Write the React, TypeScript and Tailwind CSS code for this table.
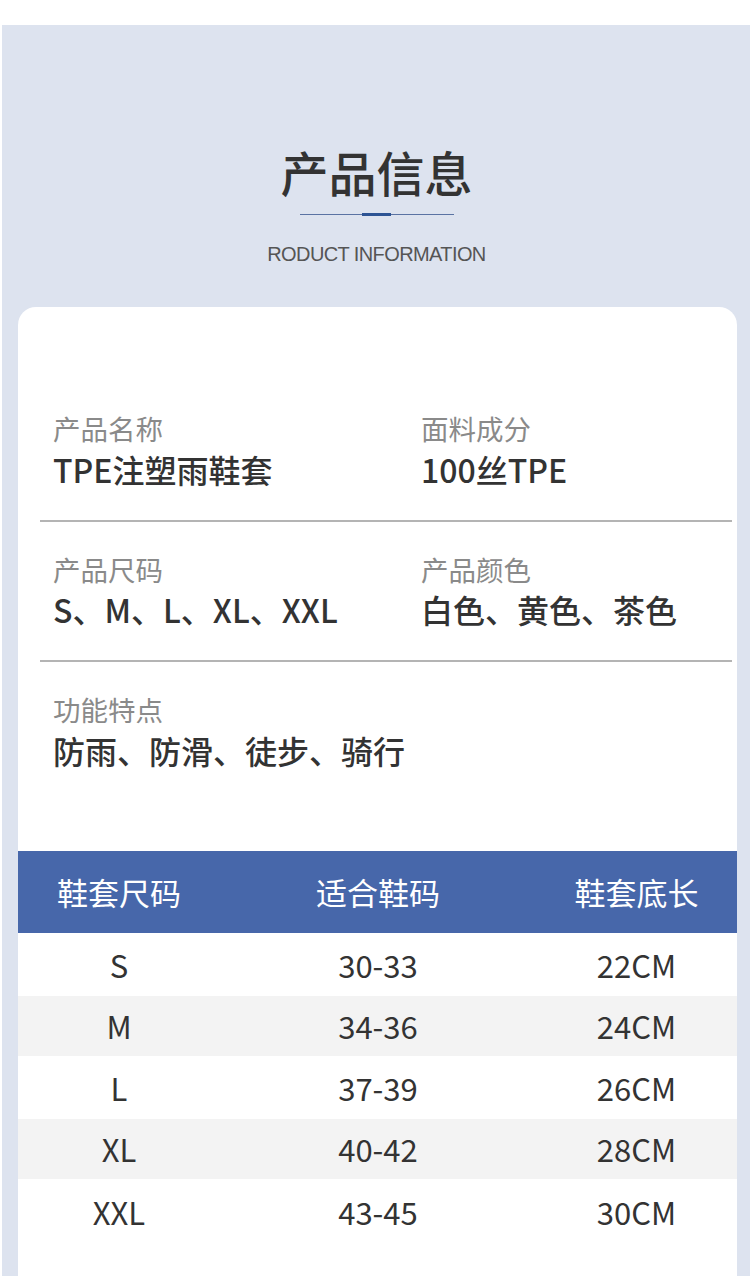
const cjk = "font-['Noto_Sans_CJK_SC','Noto_Sans',sans-serif]";

const infoRows = [
  [
    { label: "产品名称", value: "TPE注塑雨鞋套" },
    { label: "面料成分", value: "100丝TPE" },
  ],
  [
    { label: "产品尺码", value: "S、M、L、XL、XXL" },
    { label: "产品颜色", value: "白色、黄色、茶色" },
  ],
  [{ label: "功能特点", value: "防雨、防滑、徒步、骑行" }],
];

const sizes = [
  { size: "S", fit: "30-33", len: "22CM", h: "h-[63px]", bg: "bg-white" },
  { size: "M", fit: "34-36", len: "24CM", h: "h-[60px]", bg: "bg-[#f3f3f3]" },
  { size: "L", fit: "37-39", len: "26CM", h: "h-[63px]", bg: "bg-white" },
  { size: "XL", fit: "40-42", len: "28CM", h: "h-[60px]", bg: "bg-[#f3f3f3]" },
  { size: "XXL", fit: "43-45", len: "30CM", h: "h-[65px]", bg: "bg-white" },
];

const InfoItem = ({ label, value }: { label: string; value: string }) => (
  <div className="flex flex-col">
    <span className="text-[27.5px] leading-none text-[#8a8a8a]">{label}</span>
    <span className="mt-[10px] text-[32px] leading-none font-medium text-[#333]">
      {value}
    </span>
  </div>
);

export default function App() {
  return (
    <div className={`w-[750px] h-[1276px] overflow-hidden bg-white pt-[25px] pl-[2px] ${cjk}`}>
      <div className="h-full bg-[#dde3ef] flex flex-col">
        {/* title */}
        <div className="flex flex-col items-center pt-[122px] pl-[1px]">
          <h1 className="text-[48px] leading-none font-medium text-[#333]">
            产品信息
          </h1>
          <div className="relative mt-[19px] w-[154px] h-[1px] bg-[#5a73a3]">
            <div className="absolute left-[62px] top-[-1px] w-[29px] h-[3px] bg-[#2d5494]" />
          </div>
          <p className="mt-[29px] text-[20px] leading-none text-[#555] font-['Liberation_Sans',Arial,sans-serif] tracking-[-0.6px]">
            RODUCT INFORMATION
          </p>
        </div>

        {/* card */}
        <div className="mt-[43px] ml-[16px] mr-[13px] flex-1 bg-white rounded-t-[18px] flex flex-col">
          <div className="pt-[108px] flex flex-col">
            {infoRows.map((row, i) => (
              <div key={i}>
                {i > 0 && <div className="ml-[22px] mr-[5px] h-[2px] bg-[#b4b4b4]" />}
                <div className={`grid grid-cols-[368px_1fr] pl-[35px] ${i > 0 ? "pt-[34px]" : ""} pb-[35px]`}>
                  {row.map((item) => (
                    <InfoItem key={item.label} label={item.label} value={item.value} />
                  ))}
                </div>
              </div>
            ))}
          </div>

          {/* size table */}
          <div className="mt-[50px]">
            <div className="h-[82px] bg-[#4767aa] grid grid-cols-[202px_316px_1fr] items-center text-white text-[31px] leading-none">
              <span className="text-center">鞋套尺码</span>
              <span className="text-center">适合鞋码</span>
              <span className="text-center">鞋套底长</span>
            </div>
            {sizes.map((r) => (
              <div
                key={r.size}
                className={`${r.h} ${r.bg} grid grid-cols-[202px_316px_1fr] items-center text-[31px] leading-none text-[#333]`}
              >
                <span className="text-center">{r.size}</span>
                <span className="text-center">{r.fit}</span>
                <span className="text-center">{r.len}</span>
              </div>
            ))}
          </div>
        </div>
      </div>
    </div>
  );
}
